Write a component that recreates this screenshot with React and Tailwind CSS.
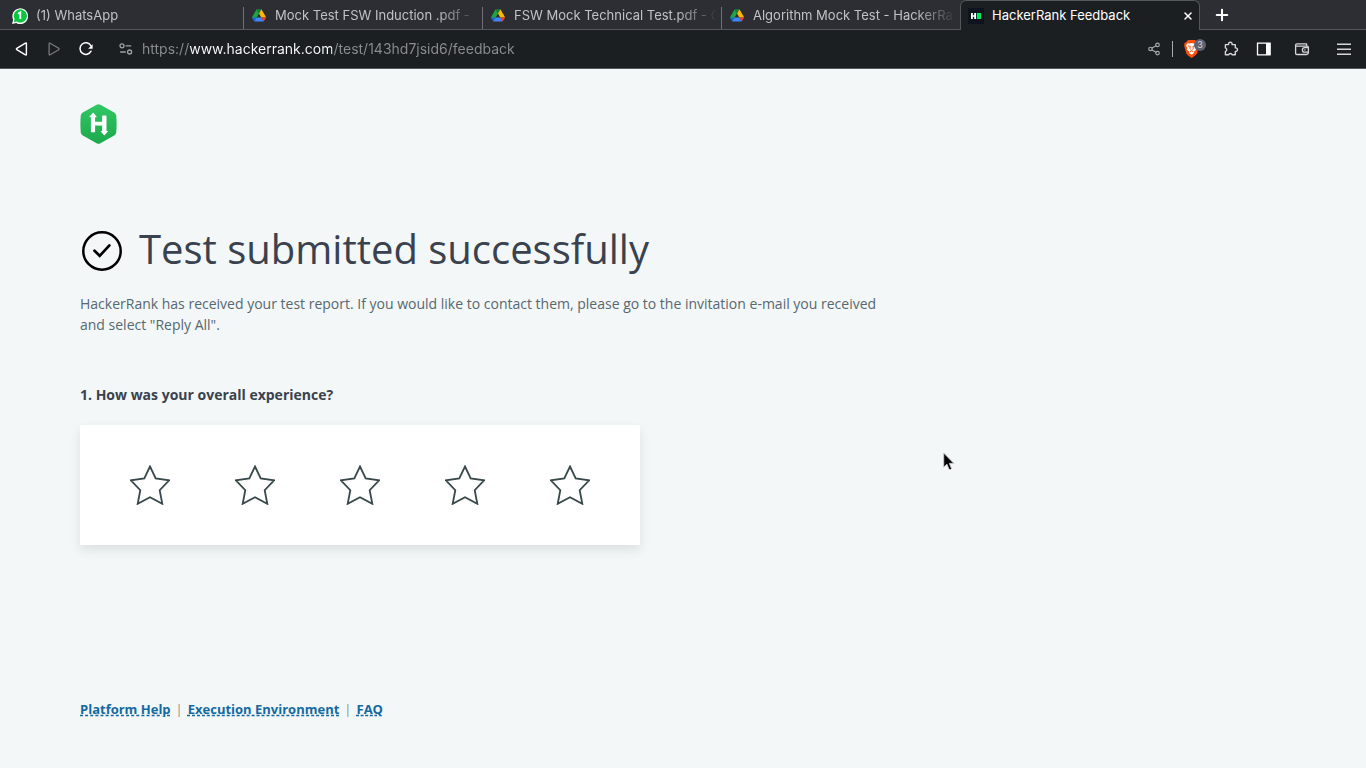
import { Share2, Plus, X } from 'lucide-react';

function WhatsAppIcon() {
  return (
    <svg className="size-4 shrink-0" viewBox="0 0 16 16" aria-hidden="true">
      <path d="M0 16l1.2-4.2A7.9 7.9 0 1 1 4.2 15z" fill="#fff" />
      <path d="M1.7 14.3l.9-3A6.6 6.6 0 1 1 4.7 13.5z" fill="#0ac63f" />
      <path d="M6 5.8L8.3 4.4V11" fill="none" stroke="#fff" strokeWidth="1.8" />
    </svg>
  );
}

function DriveIcon() {
  return (
    <svg className="size-4 shrink-0" viewBox="0 0 16 16" aria-hidden="true">
      <path d="M5.6 1.2L8 5.4 3.6 13 .9 9.4z" fill="#1ea446" />
      <path d="M5.6 1.2h4.8L8 5.4z" fill="#188038" />
      <path d="M10.4 1.2l4.8 8.2h-4.9L8 5.4z" fill="#ffba00" />
      <path d="M.8 9.4h4.9l-2.4 4.2z" fill="#1967d2" />
      <path d="M5.7 9.4h4.6l2.4 4.2H3.3z" fill="#4285f4" />
      <path d="M10.3 9.4h4.9l-2.5 4.2z" fill="#ea4335" />
    </svg>
  );
}

function RankIcon() {
  return (
    <svg className="size-4 shrink-0" viewBox="0 0 16 16" aria-hidden="true">
      <path d="M0 0h16v16H0z" fill="#0e141e" />
      <path d="M3 5h1.8v2.2h1.4V5H8v6H6.2V8.8H4.8V11H3z" fill="#fff" />
      <path d="M8.8 5h4.4v6H8.8z" fill="#00e65b" />
    </svg>
  );
}

const tabs = [
  { title: '(1) WhatsApp', Icon: WhatsAppIcon },
  { title: 'Mock Test FSW Induction .pdf -', Icon: DriveIcon },
  { title: 'FSW Mock Technical Test.pdf - G', Icon: DriveIcon },
  { title: 'Algorithm Mock Test - HackerRa', Icon: DriveIcon },
];

function TabStrip() {
  return (
    <div className="flex h-[30px] bg-[#2c2e33] text-[13px] text-[#c0c2c5]">
      <div className="flex min-w-0 border-b border-[#54575b] pl-[5px]">
        {tabs.map(({ title, Icon }, i) => (
          <div key={title} className={`flex min-w-0 items-end ${i === 3 ? 'w-[238px]' : 'w-[239px]'}`}>
            <button className="flex h-[29px] min-w-0 flex-1 items-center gap-2 pr-1 pl-[7px] pt-0.5 text-left">
              <Icon />
              <span className="min-w-0 flex-1 overflow-hidden whitespace-nowrap [mask-image:linear-gradient(to_right,black_calc(100%-40px),transparent)]">
                {title}
              </span>
            </button>
            {i < 3 && <span className="h-[22px] w-px bg-[#6d7074]" />}
          </div>
        ))}
      </div>
      <div className="flex w-60 shrink-0 items-center rounded-t-md border border-b-0 border-[#54575b] bg-[#1c1f22] pr-[3px] pl-[7px] text-white">
        <button className="flex min-w-0 flex-1 items-center gap-2 text-left">
          <RankIcon />
          <span className="whitespace-nowrap">HackerRank Feedback</span>
        </button>
        <button aria-label="Close tab" className="grid size-4 place-items-center">
          <X className="size-3" strokeWidth={3} />
        </button>
      </div>
      <div className="flex flex-1 items-center border-b border-[#54575b] pl-3">
        <button aria-label="New tab" className="grid size-5 place-items-center text-white">
          <Plus className="size-[18px]" strokeWidth={2.8} />
        </button>
      </div>
    </div>
  );
}

function Toolbar() {
  return (
    <div className="flex h-[39px] items-center border-b border-[#54575b] bg-[#1c1f22] px-3.5 text-[#d5d6d8]">
      <div className="flex items-center gap-4">
        <button aria-label="Back" className="size-4">
          <svg viewBox="0 0 16 16" className="size-4" fill="none" stroke="#fff" strokeWidth="1.4" strokeLinejoin="round">
            <path d="M12.4 2.7v10.6q0 1.2-1 .5L2.8 8.7q-.8-.7 0-1.4l8.6-5.1q1-.7 1 .5z" />
          </svg>
        </button>
        <button aria-label="Forward" className="size-4">
          <svg viewBox="0 0 16 16" className="size-4" fill="none" stroke="#77797c" strokeWidth="1.3" strokeLinejoin="round">
            <path d="M3.1 2.7v10.6q0 1.2 1 .5l8.6-5.1q.8-.7 0-1.4L4.1 2.2q-1-.7-1 .5z" />
          </svg>
        </button>
        <button aria-label="Reload" className="size-4">
          <svg viewBox="0 0 16 16" className="size-4" fill="none" stroke="#fff" strokeWidth="1.5" strokeLinecap="round">
            <path d="M13 10.2A5.8 5.8 0 1 1 12.8 4.6" />
            <path d="M14.6 3.2v4.6h-4.5z" fill="#fff" stroke="none" />
          </svg>
        </button>
      </div>
      <button aria-label="Site information" className="ml-6 size-4">
        <svg viewBox="0 0 16 16" className="size-4" fill="none" stroke="#a0a2a4" strokeWidth="1.3">
          <circle cx="4" cy="4.8" r="2" />
          <path d="M7.6 4.8h5.6M2.2 11h5.6" />
          <circle cx="11.6" cy="11" r="2" />
        </svg>
      </button>
      <input
        aria-label="Address"
        defaultValue="https://www.hackerrank.com/test/143hd7jsid6/feedback"
        className="ml-2 min-w-0 flex-1 bg-[linear-gradient(to_right,#8b8d90_48px,#fff_48px,#fff_190px,#8b8d90_190px)] bg-clip-text text-sm text-transparent outline-none"
      />
      <button aria-label="Share" className="size-4">
        <Share2 className="size-3.5 text-[#a9abad]" strokeWidth={2} />
      </button>
      <span className="ml-[9px] h-4 w-px bg-[#a9abad]" />
      <button aria-label="Brave Shields" className="relative ml-2.5 size-[18px]">
        <svg viewBox="0 0 18 18" className="size-[18px]">
          <path d="M5 0h7l2 2 2 1-.5 2.2L14.2 13q-.4 1.7-5.6 5-5-3-5.4-5L1.1 5.4 1.6 3 3.4 2z" fill="#fb4f0c" />
          <path d="M4.7 3.2l2 .4L8.6 3l2 .6 2.1-.4 1.4 2-1.2 3.1.3 1.4-1.7 1.2-.9 2.4-2 1.5-2-1.5-.9-2.4L4 9.7l.3-1.4-1.2-3.1z" fill="#fff" />
          <path d="M5 5.8l2.3.6-.4 1.9.8 1.3M12.2 5.8l-2.3.6.4 1.9-.8 1.3M7 11.7l1.6-1 1.6 1" stroke="#fb4f0c" strokeWidth="1" fill="none" />
        </svg>
        <span className="absolute -top-px left-[11px] grid size-3 place-items-center rounded-full bg-[#5f6170] text-[9px] leading-3 text-[#d5d6d8]">3</span>
      </button>
      <button aria-label="Extensions" className="ml-[22px] size-4">
        <svg viewBox="0 0 16 16" className="size-4" fill="none" stroke="currentColor" strokeWidth="1.4" strokeLinejoin="round">
          <path d="M2.4 3.6h3.2a1.8 1.8 0 1 1 3.4 0h3.3v3.3a1.8 1.8 0 1 1 0 3.5v3.3H9.1a1.8 1.8 0 0 0-3.4 0H2.4v-3.3a1.8 1.8 0 0 0 0-3.5z" />
        </svg>
      </button>
      <button aria-label="Side panel" className="ml-[17px] size-4">
        <svg viewBox="0 0 16 16" className="size-4">
          <path d="M1.5 2.2h12.5v11.6H1.5z" fill="none" stroke="#fff" strokeWidth="1.3" />
          <path d="M10 2h4.5v12H10z" fill="#fff" />
        </svg>
      </button>
      <button aria-label="Wallet" className="ml-[22px] size-4">
        <svg viewBox="0 0 16 16" className="size-4" fill="none" stroke="currentColor" strokeWidth="1.3" strokeLinejoin="round">
          <path d="M12.6 5V2.9H3Q1.6 2.9 1.6 4.2v8q0 1.3 1.3 1.3h9.7q1.8 0 1.8-2.4V6.4q0-1.2-1.2-1.2H1.8M14.4 6.7h-3.8a2.2 2.2 0 0 0 0 4.4h3.8" />
          <path d="M10.3 8.9h1.2" />
        </svg>
      </button>
      <button aria-label="Menu" className="ml-[26px] size-4">
        <svg viewBox="0 0 16 16" className="size-4" stroke="currentColor" strokeWidth="1.4">
          <path d="M1 3.3h14M1 8.3h14M1 13.3h14" />
        </svg>
      </button>
    </div>
  );
}

function Logo() {
  return (
    <svg className="h-10 w-[37px]" viewBox="0 0 37 40" role="img" aria-label="HackerRank">
      <defs>
        <linearGradient id="logo-green" x1="0" y1="0" x2="0" y2="1">
          <stop offset="0" stopColor="#32c766" />
          <stop offset="1" stopColor="#1ba94c" />
        </linearGradient>
      </defs>
      <path d="M16.6.7q1.9-1.1 3.8 0l13.8 7.8q1.6 1 2 2.8.8 8.7 0 17.4-.4 1.8-2 2.8l-13.8 7.8q-1.9 1.1-3.8 0L2.8 31.5q-1.6-1-2-2.8Q0 20 .8 11.3q.4-1.8 2-2.8z" fill="url(#logo-green)" />
      <path d="M13.2 8.6l3.3 4q.3.6-.4.6h-1v4.6h7v-5.7q0-.5.5-.5h3.4q.5 0 .5.5V27h1q.7 0 .4.6l-3.6 3.8-3.6-3.8q-.3-.6.4-.6h1v-5.5h-7v6.2q0 .5-.5.5h-3.2q-.5 0-.5-.5V13.2h-1q-.7 0-.4-.6z" fill="#fff" />
    </svg>
  );
}

function Feedback() {
  return (
    <main className="px-20 pt-[35px] font-['Open_Sans','Noto_Sans',sans-serif]">
      <Logo />
      <div className="mt-[75px] flex items-center gap-[15px]">
        <svg className="size-11 shrink-0" viewBox="0 0 44 44" fill="none" stroke="#000" aria-hidden="true">
          <circle cx="22" cy="24" r="18.7" strokeWidth="2.5" />
          <path d="M14.5 23.8l5.2 5 9.7-10.4" strokeWidth="2.7" strokeLinecap="round" />
        </svg>
        <h1 className="text-[40px] leading-[60px] text-[#39424e]">Test submitted successfully</h1>
      </div>
      <p className="mt-3.5 max-w-[800px] text-sm leading-[21px] text-[#576871]">
        HackerRank has received your test report. If you would like to contact them, please go to the invitation e-mail you received and select "Reply All".
      </p>
      <section aria-labelledby="experience">
        <h2 id="experience" className="mt-[49px] text-sm leading-[21px] font-bold text-[#39424e]">
          1. How was your overall experience?
        </h2>
        <div className="mt-5 flex h-[120px] max-w-[560px] items-center justify-between bg-white px-[50px] shadow-[0_5px_10px_rgba(57,66,78,0.12)]">
          {[1, 2, 3, 4, 5].map((n) => (
            <button key={n} aria-label={`${n} of 5 stars`} className="size-10">
              <svg className="size-10" viewBox="0 0 40 40" fill="none" stroke="#39484a" strokeWidth="1.8">
                <path d="M20 1.5l5.7 12 13.4 1.8-9.4 9.9 2.6 13.6L20 32.3 7.7 38.8l2.6-13.6L.9 15.3l13.4-1.8z" />
              </svg>
            </button>
          ))}
        </div>
      </section>
      <footer className="mt-[154px] flex items-center gap-[5px] pb-10 text-[13px] leading-5 font-bold text-[#1469a1]">
        <a href="#help" className="underline decoration-dashed">Platform Help</a>
        <span className="font-normal text-[#8a8f94]">|</span>
        <a href="#environment" className="underline decoration-dashed">Execution Environment</a>
        <span className="font-normal text-[#8a8f94]">|</span>
        <a href="#faq" className="underline decoration-dashed">FAQ</a>
      </footer>
    </main>
  );
}

export default function App() {
  return (
    <div className="relative min-h-screen bg-[#f3f7f7]">
      <header className="font-[Inter,sans-serif]">
        <TabStrip />
        <Toolbar />
      </header>
      <Feedback />
      <svg className="pointer-events-none absolute top-[452px] left-[943px] h-[19px] w-3" viewBox="0 0 12 19" aria-hidden="true">
        <path d="M.7 1v14.2l3.2-3 2.2 5.3q1.8.3 2.4-1.1L6.4 11.4h4.5z" fill="#000" stroke="#c9cccc" strokeWidth="1" />
      </svg>
    </div>
  );
}
